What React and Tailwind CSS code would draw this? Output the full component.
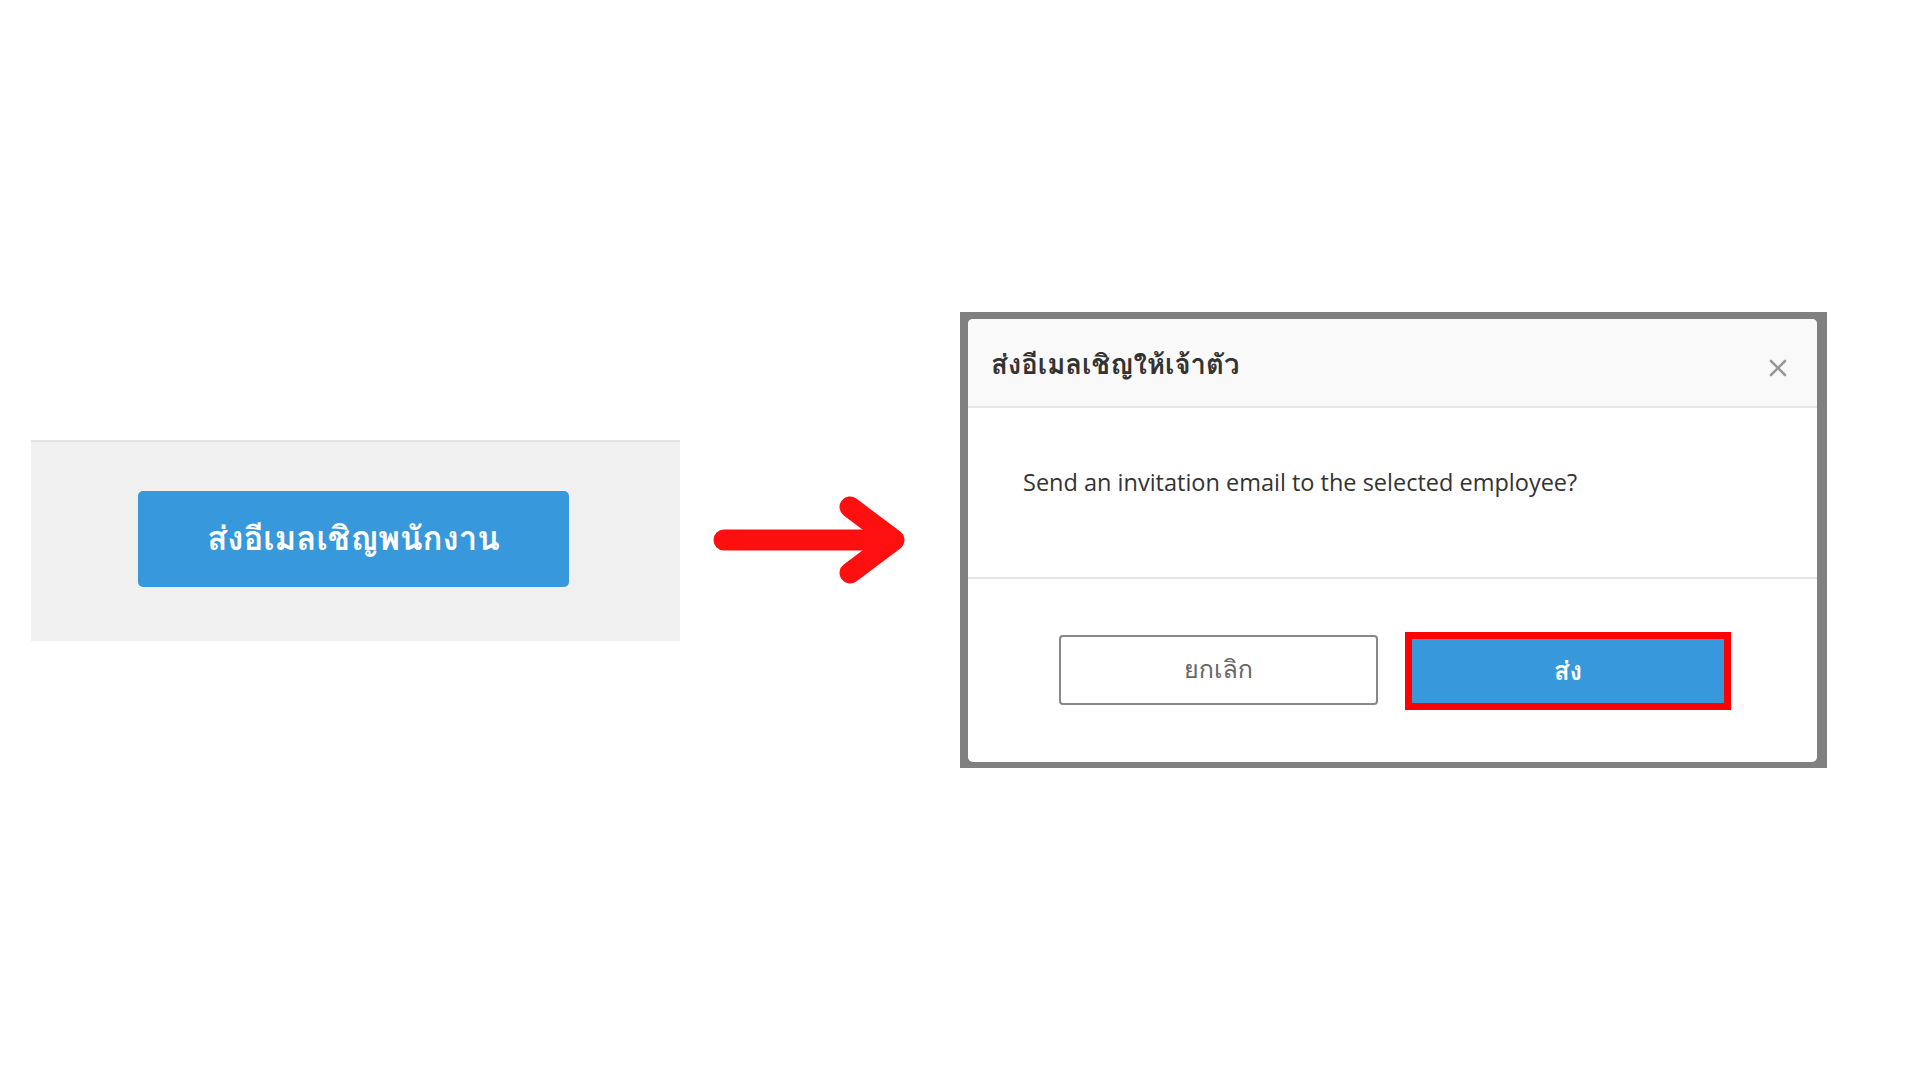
const thai = '"Tahoma", "Loma", "Waree", "Garuda", "Noto Sans Thai Looped", "Noto Sans Thai", "Open Sans", sans-serif';

export default function App() {
  return (
    <div className="w-[1920px] h-[1080px] bg-white flex items-center" style={{ fontFamily: '"Open Sans", "Noto Sans", sans-serif' }}>
      {/* Left panel */}
      <div className="ml-[31px] w-[649px] h-[201px] bg-[#f0f0f0] border-t-2 border-[#e3e3e3] pl-[107px] pt-[49px] shrink-0">
        <div className="w-[431px] h-[96px] rounded-[5px] bg-[#3798db] flex items-center justify-center text-white font-bold text-[33px]" style={{ fontFamily: thai }}>
          ส่งอีเมลเชิญพนักงาน
        </div>
      </div>

      {/* Arrow */}
      <svg className="ml-[33px] shrink-0" width="193" height="88" viewBox="0 0 193 88">
        <g fill="none" stroke="#ff1010" strokeWidth="21" strokeLinecap="round" strokeLinejoin="round">
          <line x1="11" y1="44" x2="176" y2="44" />
          <polyline points="137,11 181,44 137,77" />
        </g>
      </svg>

      {/* Modal */}
      <div className="ml-[54px] w-[867px] h-[456px] bg-[#808080] pt-[7px] pl-[8px] pr-[10px] pb-[6px] shrink-0">
        <div className="w-full h-full bg-white rounded-[5px] flex flex-col overflow-hidden">
          <div className="h-[89px] bg-[#f9f9f9] border-b-2 border-[#e6e6e6] flex items-center justify-between pl-[23px] pr-[30px]">
            <span className="text-[27.5px] font-bold text-[#333] mt-[4px]" style={{ fontFamily: thai }}>ส่งอีเมลเชิญให้เจ้าตัว</span>
            <svg width="18" height="18" viewBox="0 0 18 18" className="mt-[11px]">
              <g stroke="#999" strokeWidth="2.6" strokeLinecap="round">
                <line x1="2" y1="2" x2="16" y2="16" />
                <line x1="16" y1="2" x2="2" y2="16" />
              </g>
            </svg>
          </div>
          <div className="h-[171px] border-b-2 border-[#e6e6e6] pl-[55px] pt-[59px]">
            <p className="text-[23.5px] text-[#333] leading-[30px]">Send an invitation email to the selected employee?</p>
          </div>
          <div className="flex items-start pt-[53px] pl-[91px]">
            <div className="w-[319px] h-[70px] mt-[3px] border-2 border-[#888] rounded-[4px] flex items-center justify-center text-[25px] text-[#666]" style={{ fontFamily: thai }}>
              ยกเลิก
            </div>
            <div className="ml-[27px] w-[326px] h-[78px] border-[7px] border-[#ff0000] bg-[#3798db] flex items-center justify-center text-white font-bold text-[25.5px]" style={{ fontFamily: thai }}>
              ส่ง
            </div>
          </div>
        </div>
      </div>
    </div>
  );
}
